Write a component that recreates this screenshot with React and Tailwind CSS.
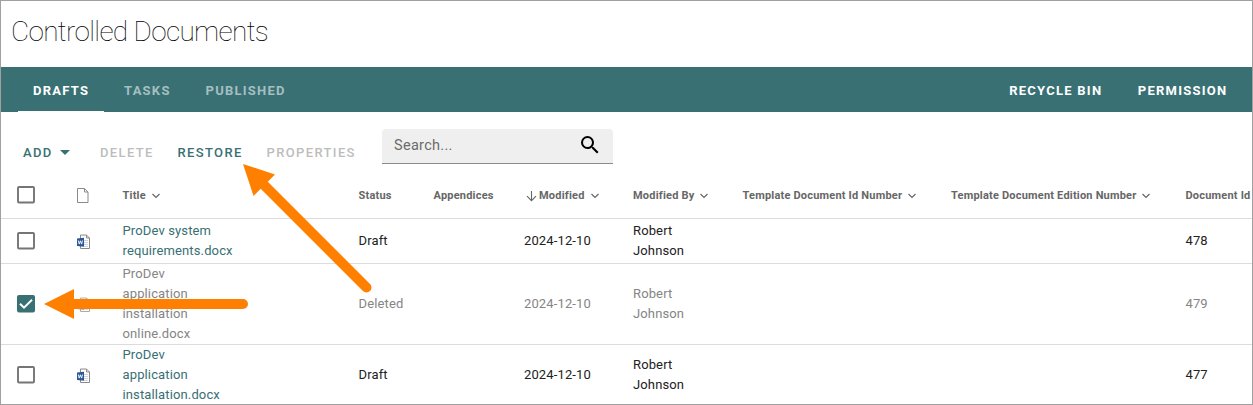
import React from "react";

const COLUMNS =
  "grid grid-cols-[75px_46.5px_236px_75px_90.5px_109px_109.5px_208.5px_234.5px_80px] items-center";

function Checkbox({ checked }) {
  return (
    <svg className="ml-4 mb-px size-[18px]" viewBox="0 0 18 18" fill="none">
      {checked ? (
        <>
          <rect width="18" height="17.5" rx="2" fill="#387074" />
          <path d="M3 8.700l4 4 8-8" stroke="#fff" strokeWidth="2" />
        </>
      ) : (
        <rect x="1" y="1" width="16" height="15.500" rx="1" stroke="#757575" strokeWidth="1.900" />
      )}
    </svg>
  );
}

function PageIcon() {
  return (
    <svg className="ml-px h-4 w-3" viewBox="0 0 12 16" fill="none" stroke="#8a8a8a">
      <path d="M.5.5h7l3.500 3.500v10.500H.5z" />
      <path d="M7.500.5V4H11" />
    </svg>
  );
}

function WordIcon({ faded }) {
  return (
    <svg
      className={faded ? "ml-px mt-px h-4 w-[14px] opacity-70" : "ml-px mt-px h-4 w-[14px]"}
      viewBox="0 0 14 16"
      fill="none"
    >
      <path d="M3.500 1h6l3 3v10.500h-9z" fill="#fff" stroke="#8a8a8a" />
      <path d="M9.500 1v3h3" stroke="#8a8a8a" />
      <path d="M7 6.500h4M7 8.500h4M7 10.500h4M7 12.500h4" stroke="#cfd4dc" />
      <path d="M0 4.500l7-.8v9.100l-7-.8z" fill="#2b579a" />
      <path d="M1.300 6.500l.9 3.600 1.200-3.300 1.200 3.300.9-3.600" stroke="#fff" strokeWidth=".9" />
    </svg>
  );
}

function Chevron() {
  return (
    <svg className="ml-[6px] mt-px h-[6px] w-2" viewBox="0 0 8 6" fill="none" stroke="#666" strokeWidth="1.2">
      <path d="M.5 1L4 4.500 7.500 1" />
    </svg>
  );
}

function HeaderCell({ label, menu, sorted }) {
  return (
    <div className={sorted ? "ml-[2px] flex items-center whitespace-nowrap" : "flex items-center whitespace-nowrap"}>
      {sorted && (
        <svg className="mr-[2px] h-3 w-[11px]" viewBox="0 0 11 12" fill="none" stroke="#666" strokeWidth="1.1">
          <path d="M5.500 1v9.600M1 6.200l4.500 4.500L10 6.200" />
        </svg>
      )}
      {label}
      {menu && <Chevron />}
    </div>
  );
}

const HEADERS = [
  { label: "Title", menu: true },
  { label: "Status" },
  { label: "Appendices" },
  { label: "Modified", menu: true, sorted: true },
  { label: "Modified By", menu: true },
  { label: "Template Document Id Number", menu: true },
  { label: "Template Document Edition Number", menu: true },
  { label: "Document Id" },
];

const ROWS = [
  { title: ["ProDev system", "requirements.docx"], status: "Draft", id: "478", height: "h-[45px]" },
  {
    title: ["ProDev", "application", "installation", "online.docx"],
    status: "Deleted",
    id: "479",
    deleted: true,
    height: "h-[81px]",
  },
  { title: ["ProDev", "application", "installation.docx"], status: "Draft", id: "477", height: "h-[61px]" },
];

function Row({ row }) {
  return (
    <div
      className={`${COLUMNS} ${row.height} shrink-0 border-b border-[#dcdcdc] ${
        row.deleted ? "text-[#858585]" : "text-[#212121]"
      }`}
    >
      <Checkbox checked={row.deleted} />
      <WordIcon faded={row.deleted} />
      <div className={row.deleted ? "-mt-px" : "text-[#387074]"}>
        {row.title.map((line) => (
          <div key={line}>{line}</div>
        ))}
      </div>
      <div>{row.status}</div>
      <div />
      <div>2024-12-10</div>
      <div>
        Robert
        <br />
        Johnson
      </div>
      <div />
      <div />
      <div>{row.id}</div>
    </div>
  );
}

export default function App() {
  return (
    <div className="relative flex h-[405px] w-[1253px] flex-col overflow-hidden border border-[#a0a0a0] bg-white font-['Roboto',sans-serif] text-[13px] leading-5 tracking-[0.13px]">
      <h1 className="flex h-[66px] shrink-0 items-center pb-1 pl-[10px] text-[28px] font-thin leading-9 tracking-[-0.67px] text-black">
        Controlled Documents
      </h1>

      <nav className="flex h-[45px] shrink-0 items-stretch bg-[#387074] text-[13px] font-bold tracking-[1.25px] text-white">
        <div className="ml-[17px] flex w-[86px] items-center border-b border-white pl-[15px] pt-[3px]">DRAFTS</div>
        <div className="ml-5 flex w-[81.500px] items-center pt-[2px] text-[#a5bfc1]">TASKS</div>
        <div className="flex items-center pt-[2px] text-[#a5bfc1]">PUBLISHED</div>
        <div className="ml-auto mr-[24.500px] flex items-center gap-[35.500px] pt-[2px]">
          <span>RECYCLE BIN</span>
          <span>PERMISSION</span>
        </div>
      </nav>

      <div className="flex h-[61px] shrink-0 items-start pl-[22px] text-[13px] font-medium tracking-[1.37px] text-[#bdbdbd]">
        <div className="mt-[31px] flex w-[77px] items-center text-[#387074]">
          ADD
          <svg className="ml-[7px] mb-px h-[5px] w-[10px]" viewBox="0 0 10 5" fill="#387074">
            <path d="M0 0h10L5 5z" />
          </svg>
        </div>
        <div className="mt-[31px] w-[77.500px]">DELETE</div>
        <div className="mt-[31px] w-[89px] text-[#387074]">RESTORE</div>
        <div className="mt-[31px] w-[115.500px]">PROPERTIES</div>
        <div className="mt-[17px] flex h-[35px] w-[231px] items-center justify-between rounded-t border-b border-[#8c8c8c] bg-[#efefef] pb-[2px] pl-3 pr-[11px] text-[14.500px] font-normal tracking-[0.3px] text-[#6b6b6b]">
          <span className="pt-px">Search...</span>
          <svg className="mb-px h-6 w-6" viewBox="0 0 24 24" fill="#000">
            <path d="M15.500 14h-.79l-.28-.27A6.471 6.471 0 0 0 16 9.500 6.500 6.500 0 1 0 9.500 16c1.610 0 3.090-.59 4.230-1.570l.27.28v.79l5 4.990L20.490 19l-4.990-5zm-6 0C7.010 14 5 11.990 5 9.500S7.010 5 9.500 5 14 7.010 14 9.500 11.990 14 9.500 14z" />
          </svg>
        </div>
      </div>

      <div className={`${COLUMNS} h-[46px] shrink-0 border-b border-[#dcdcdc] text-[11px] font-bold tracking-[0.2px] text-[#666]`}>
        <Checkbox />
        <PageIcon />
        {HEADERS.map((h) => (
          <HeaderCell key={h.label} {...h} />
        ))}
      </div>

      {ROWS.map((row) => (
        <Row key={row.id} row={row} />
      ))}

      <svg className="pointer-events-none absolute -left-px -top-px h-[405px] w-[1253px]" viewBox="0 0 1253 405">
        <g stroke="#ff8000" strokeWidth="10" strokeLinecap="round">
          <path d="M262 183l104.500 104.500" />
          <path d="M70 304h173" />
        </g>
        <g fill="#ff8000">
          <path d="M243 164l32 10.500-21.500 21.500z" />
          <path d="M44 304l30-15v30z" />
        </g>
      </svg>
    </div>
  );
}
